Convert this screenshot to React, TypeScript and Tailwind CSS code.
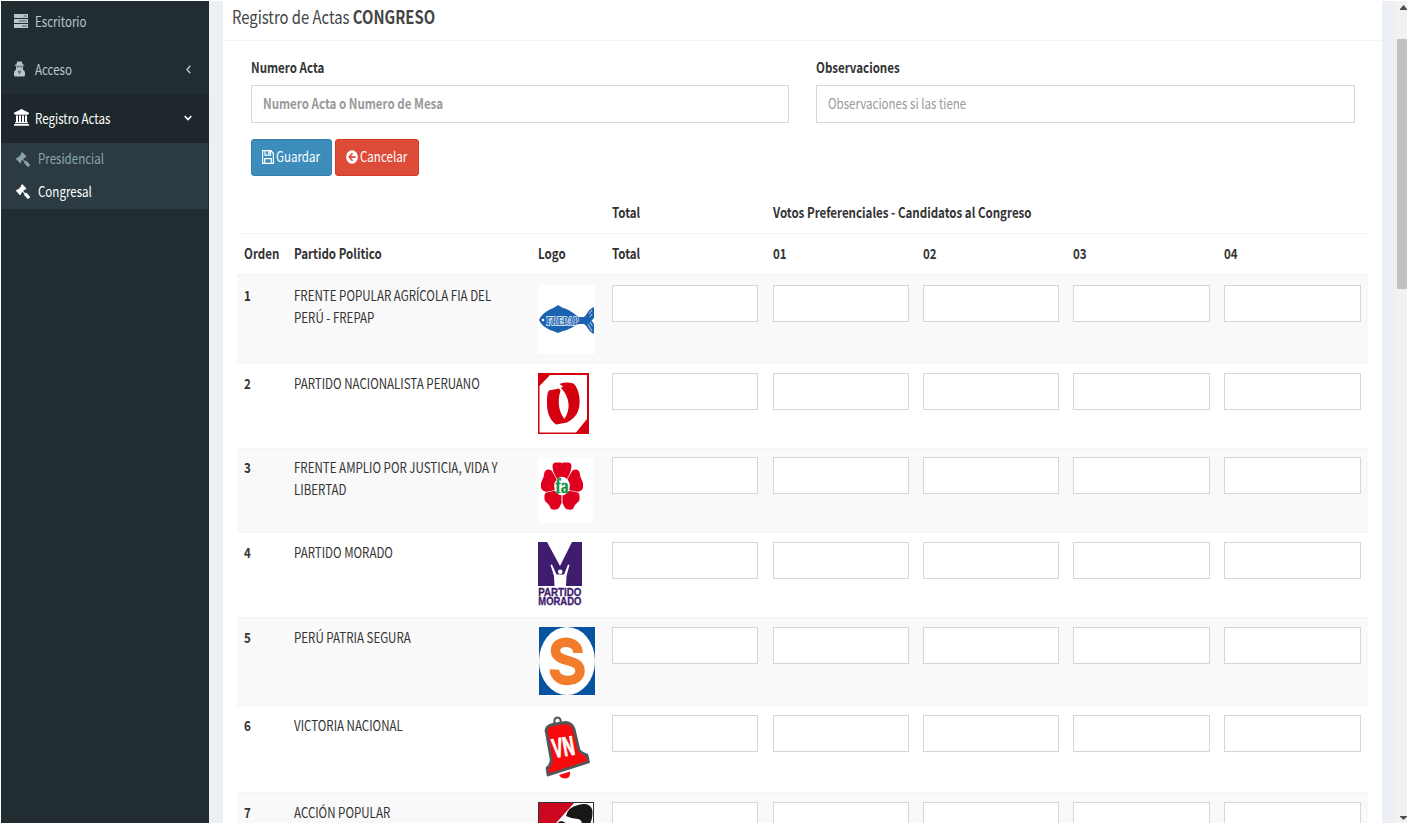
import React from "react";
import { FaArrowCircleLeft } from "react-icons/fa";

const FONT = "font-['Noto_Sans_CJK_SC','Noto_Sans',sans-serif]";

function T({ children, className = "" }: { children: React.ReactNode; className?: string }) {
  return (
    <span className={`inline-block origin-left -translate-y-px scale-x-[0.824] whitespace-nowrap ${className}`}>{children}</span>
  );
}

function TasksIcon() {
  return (
    <svg className="-mt-px h-[14px] w-[14px] shrink-0" viewBox="0 0 14 14" preserveAspectRatio="none">
      <path fill="#b8c7ce" d="M0 0h14v4H0zM0 5h14v4H0zM0 10h14v4H0z" />
      <path fill="#222d32" opacity=".7" d="M9.500 1.500h3.500v1h-3.500zM5 6.500h8v1H5zM8 11.500h5v1H8z" />
    </svg>
  );
}

function SecretIcon() {
  return (
    <svg className="-mt-[2px] h-[16px] w-[11px] shrink-0" viewBox="0 0 11 16" fill="currentColor">
      <path d="M3.300.300Q5.500 1 7.700.300L8.600 3.200 10.200 4V4.800H.800V4L2.400 3.200Z" />
      <path d="M2 5.300H9V7.200Q8.600 8.500 9.300 8.900Q11 9.500 11 12V14Q11 15.500 9.500 15.500H1.500Q0 15.500 0 14V12Q0 9.500 1.700 8.900Q2.400 8.500 2 7.200Z" />
      <path fill="#222d32" opacity=".65" d="M2.800 5.700H5L4.600 6.800H3.200ZM6 5.700H8.200L7.800 6.800H6.400ZM3.700 9.300 5.500 10.200 7.300 9.300 6.500 11.500 5.500 13.500 4.500 11.500Z" />
    </svg>
  );
}

function BankIcon() {
  return (
    <svg className="-mt-[2px] h-[17px] w-[15px] shrink-0" viewBox="0 0 15 17" fill="currentColor">
      <path d="M7.500 0 15 3.700V5H14V5.800H1V5H0V3.700ZM2 6.500H4V13H5V6.500H7V13H8V6.500H10V13H11V6.500H13V13H13.500L14 13.500V14.300H1V13.500L1.500 13H2ZM.500 15H14.500L15 15.500V16.800H0V15.500Z" />
    </svg>
  );
}

function Gavel() {
  return (
    <svg className="h-[15px] w-[14px] shrink-0" viewBox="30 0 1750 1780" preserveAspectRatio="none" fill="currentColor">
      <path d="M1771 1536q0 53-37 90l-107 108q-39 37-91 37-53 0-90-37l-363-364q-38-36-38-90 0-53 43-96l-256-256-126 126q-14 14-34 14t-34-14q2 2 12.500 12t12.500 13 10 11.500 10 13.500 6 13.500 5.500 16.500 1.500 18q0 38-28 68-3 3-16.500 18t-19 20.500-18.500 16.500-22 15.500-22 9-26 4.500q-40 0-68-28l-408-408q-28-28-28-68 0-13 4.500-26t9-22 15.500-22 16.500-18.500 20.500-19 18-16.500q30-28 68-28 10 0 18 1.500t16.500 5.500 13.500 6 13.500 10 11.500 10 13 12.500 12 12.500q-14-14-14-34t14-34l348-348q14-14 34-14t34 14q-2-2-12.500-12t-12.500-13-10-11.500-10-13.500-6-13.500-5.500-16.500-1.500-18q0-38 28-68 3-3 16.500-18t19-20.500 18.500-16.500 22-15.500 22-9 26-4.500q40 0 68 28l408 408q28 28 28 68 0 13-4.500 26t-9 22-15.500 22-16.500 18.500-20.500 19-18 16.500q-30 28-68 28-10 0-18-1.500t-16.500-5.500-13.500-6-13.500-10-11.500-10-13-12.500-12-12.500q14 14 14 34t-14 34l-126 126 256 256q43-43 96-43 52 0 91 37l363 363q37 39 37 91z" />
    </svg>
  );
}

function FishLogo() {
  return (
    <svg width="57" height="69" viewBox="0 0 57 69">
      <rect width="57" height="69" fill="#fff" />
      <path fill="#1b63b0" d="M1 35C4 28 11 25 17 22L20 20 25 23C31 24 36 29 41 32H46C49 30 50 24 56 22V33L53.500 35.500 56 39V49C51 47 50 42 46 39H41C36 41 31 45 25 46L20 48 15 46C9 44 3 40 1 35Z" />
      <circle cx="5" cy="35" r="1.300" fill="#fff" />
      <path stroke="#fff" strokeWidth=".7" fill="none" d="M51 29 54 25M52 32 54 29M50 39 54 46M52 37 54.500 41" />
      <text x="8.500" y="39.500" textLength="32" lengthAdjust="spacingAndGlyphs" fill="#1b63b0" stroke="#e8f0f8" strokeWidth="1.500" paintOrder="stroke" fontFamily="Liberation Serif" fontWeight="700" fontSize="12">FREPAP</text>
    </svg>
  );
}

function NacionalistaLogo() {
  return (
    <svg width="51" height="61" viewBox="0 0 51 61">
      <rect width="51" height="61" fill="#d5000f" />
      <path fill="#fff" d="M12 2H49V46L38 59.500H1.500V13Z" />
      <path fill="#d5000f" d="M11 17.500 21 15.500 22.500 17.500C19 29 21 39 26.500 46L33 46 29 49.500 18 51.500C12 47 9 40 9 31C9 25 9 20 11 17.500Z" />
      <path fill="#d5000f" d="M21.500 11C28 9 34 9 37 12C41 18 42 25 41.500 31C41 39 37 46 29 49L26 46.500C33 37 32 24 23 15L25 13.500Z" />
    </svg>
  );
}

function AmplioLogo() {
  return (
    <svg width="55" height="66" viewBox="0 0 55 66">
      <rect width="55" height="66" fill="#fff" />
      <g fill="#df0020">
        <path d="M14.500 9Q14.500 5 19 5.500H23L24 6.500 25 5.500H29Q33.500 5 33.500 9Q33 14 31.500 17L29 22H19L16.500 17Q14.500 14 14.500 9Z" />
        <path d="M32.300 17 34.500 13.500Q39 11 41.500 15L42.500 20 45 26V31Q43 35 39 34.800L31 33 28 25Z" />
        <path d="M15.700 17 13.500 13.500Q9 11 6.500 15L5.500 20 3 26V31Q5 35 9 34.800L17 33 20 25Z" />
        <path d="M32 33.800 40.500 35.800Q42.500 39 41 44L37 48 35 52Q30 54 27 51L24.500 46V36Z" />
        <path d="M16 33.800 7.500 35.800Q5.500 39 7 44L11 48 13 52Q18 54 21 51L23.500 46V36Z" />
      </g>
      <ellipse cx="24" cy="29" rx="7.800" ry="9.300" fill="#fff" />
      <text x="17.500" y="36" fill="#109447" stroke="#109447" strokeWidth=".5" fontFamily="Liberation Serif" fontWeight="700" fontSize="21" textLength="13" lengthAdjust="spacingAndGlyphs">fa</text>
    </svg>
  );
}

function MoradoLogo() {
  return (
    <svg className="overflow-visible" width="46" height="67" viewBox="0 0 46 67">
      <rect width="44" height="44" fill="#3e1d6e" />
      <path fill="#fff" d="M9 0H34L22 24ZM12.500 23 14 22.500 18.500 32.500H26L30 22.500 31.500 23 28.500 34 28 44H16.500L16 34Z" />
      <circle cx="22.200" cy="29.800" r="2.300" fill="#fff" />
      <g fill="#3e1d6e" stroke="#3e1d6e" strokeWidth=".3" fontFamily="Liberation Sans" fontWeight="700" fontSize="10">
        <text x=".3" y="54" textLength="43" lengthAdjust="spacingAndGlyphs">PARTIDO</text>
        <text x=".3" y="63" textLength="43" lengthAdjust="spacingAndGlyphs">MORADO</text>
      </g>
    </svg>
  );
}

function SeguraLogo() {
  return (
    <svg width="57" height="68" viewBox="0 0 57 68">
      <rect x="1" width="56" height="68" fill="#0653a0" />
      <ellipse cx="29" cy="34" rx="28" ry="34" fill="#fff" />
      <path fill="none" stroke="#f17c2c" strokeWidth="9.500" d="M40 26C40 12 17.500 12 17.500 23.500C17.500 36 42 31 42 43.500C42 58 16 56 16.500 42.500" />
    </svg>
  );
}

function VictoriaLogo() {
  return (
    <svg width="57" height="68" viewBox="0 0 57 68">
      <ellipse cx="19.500" cy="6" rx="3.200" ry="3.500" fill="none" stroke="#50585a" strokeWidth="2" />
      <path fill="#f90a0c" stroke="#50585a" strokeWidth="2.800" strokeLinejoin="round" d="M8.500 18Q6.500 12 14 9.500L28 7.500Q34 8 36 14L41 35Q43 38 49 40L50.500 47 10 60 9 53Q14 49 13 43Z" />
      <path fill="#f90a0c" d="M21 60 32 56.500Q33 63 27 63.500Q23 63.500 21 60Z" />
      <text x="16" y="43" transform="rotate(-10 16 43)" fill="#fff" stroke="#fff" strokeWidth="1" fontFamily="Liberation Sans" fontWeight="700" fontSize="27" textLength="22" lengthAdjust="spacingAndGlyphs">VN</text>
    </svg>
  );
}

function AccionLogo() {
  return (
    <svg width="56" height="68" viewBox="0 0 56 68">
      <rect x=".5" y=".5" width="55" height="67" fill="#fff" stroke="#333" />
      <path fill="#cc0720" d="M1 1H36L1 40Z" />
      <path fill="#191715" d="M28 14Q30 5 40 3Q51 0 54 7Q56 16 50 26H44Q45 18 40 17Q34 17 28 14ZM17 24Q20 19 24 19 28 21 33 24Z" />
    </svg>
  );
}

const rows = [
  { name: ["FRENTE POPULAR AGRÍCOLA FIA DEL", "PERÚ - FREPAP"], logo: <FishLogo />, cls: "h-[87px] bg-[#f9f9f9] pt-[9px]" },
  { name: ["PARTIDO NACIONALISTA PERUANO"], logo: <NacionalistaLogo />, cls: "h-[85px] border-t pt-[9px]" },
  { name: ["FRENTE AMPLIO POR JUSTICIA, VIDA Y", "LIBERTAD"], logo: <AmplioLogo />, cls: "h-[84px] border-t bg-[#f9f9f9] pt-[8px]" },
  { name: ["PARTIDO MORADO"], logo: <MoradoLogo />, cls: "h-[85px] border-t pt-[9px]" },
  { name: ["PERÚ PATRIA SEGURA"], logo: <SeguraLogo />, cls: "h-[88px] border-t bg-[#f9f9f9] pt-[9px]" },
  { name: ["VICTORIA NACIONAL"], logo: <VictoriaLogo />, cls: "h-[87px] border-t pt-[9px]" },
  { name: ["ACCIÓN POPULAR"], logo: <AccionLogo />, cls: "h-[87px] border-t bg-[#f9f9f9] pt-[9px]" },
];

const GRID = "grid shrink-0 grid-cols-[50px_244px_74px_161px_150px_150px_151px_151px] border-[#f4f4f4]";

function Field({ className = "" }: { className?: string }) {
  return <input className={`h-[37px] min-w-0 border border-[#d2d6de] bg-white outline-none ${className}`} />;
}

function Sidebar() {
  return (
    <aside className="w-[208px] shrink-0 bg-[#222d32] text-[#b8c7ce]">
      <div className="flex h-[45px] items-center pb-[4px] pl-[13px]">
        <TasksIcon />
        <T className="ml-[7px]">Escritorio</T>
      </div>
      <div className="flex h-[48px] items-center pl-[13px]">
        <SecretIcon />
        <T className="ml-[10px]">Acceso</T>
        <svg className="-mt-[2px] mr-[18px] ml-auto h-[9px] w-[5px]" viewBox="0 0 5 9" fill="none" stroke="currentColor" strokeWidth="1.400"><path d="M4.300.700 1 4.500 4.300 8.300" /></svg>
      </div>
      <div className="flex h-[49px] items-center bg-[#1e282c] pl-[13px] text-white">
        <BankIcon />
        <T className="ml-[6px]">Registro Actas</T>
        <svg className="-mt-[2px] mr-[17px] ml-auto h-[6px] w-[8px]" viewBox="0 0 8 6" fill="none" stroke="currentColor" strokeWidth="1.600"><path d="M.700 1 4 4.600 7.300 1" /></svg>
      </div>
      <div className="mr-px h-[66px] bg-[#2c3b41]">
        <div className="flex h-[32px] items-center pl-[15px] text-[#8aa4af]">
          <Gavel />
          <T className="ml-[8px]">Presidencial</T>
        </div>
        <div className="flex h-[33px] items-center pl-[15px] text-white">
          <Gavel />
          <T className="ml-[8px]">Congresal</T>
        </div>
      </div>
    </aside>
  );
}

export default function App() {
  return (
    <div className={`h-[826px] w-[1414px] overflow-hidden bg-white pt-px pr-[7px] pb-[3px] pl-px text-[14px] leading-[22px] text-[#333] ${FONT}`}>
      <div className="flex h-[822px] overflow-hidden">
        <Sidebar />
        <main className="flex min-w-0 flex-1 bg-[#ecf0f5] px-[14px]">
          <div className="flex w-[1159px] flex-col bg-white">
            <div className="flex h-[40px] shrink-0 items-center border-b border-[#f4f4f4] pb-[8px] pl-[9px] text-[18px] text-[#444]">
              <T>Registro de Actas <b>CONGRESO</b></T>
            </div>
            <div className="flex shrink-0 gap-[27px] pt-[16px] pl-[28px]">
              <div className="flex w-[538px] flex-col">
                <T className="font-bold">Numero Acta</T>
                <div className="mt-[6px] flex h-[38px] items-center border border-[#d2d6de] pl-[10.500px] font-bold text-[#999]">
                  <T>Numero Acta o Numero de Mesa</T>
                </div>
              </div>
              <div className="flex w-[539px] flex-col">
                <T className="font-bold">Observaciones</T>
                <div className="mt-[6px] flex h-[38px] items-center border border-[#d2d6de] pl-[11px] text-[#999]">
                  <T>Observaciones si las tiene</T>
                </div>
              </div>
            </div>
            <div className="flex shrink-0 gap-[3px] pt-[16px] pl-[28px] text-white">
              <button className="flex h-[37px] w-[81px] items-center rounded-[3px] border border-[#367fa9] bg-[#3c8dbc] pb-px pl-[10px]">
                <svg className="h-[14px] w-[12px] shrink-0" viewBox="0 0 12 14" fill="none" stroke="currentColor" strokeWidth="1.200">
                  <path d="M.600.600H9L11.400 3.500V13.400H.600ZM3 .600V5.200H8.500V.600M2.700 13V8.700H9.300V13" />
                  <path d="M6.800 1.200V4" strokeWidth="1.600" />
                </svg>
                <T className="ml-[2px]">Guardar</T>
              </button>
              <button className="flex h-[37px] w-[84px] items-center rounded-[3px] border border-[#d73925] bg-[#dd4b39] pb-px pl-[10px]">
                <FaArrowCircleLeft className="h-[14px] w-[12px] shrink-0" preserveAspectRatio="none" />
                <T className="ml-[2px]">Cancelar</T>
              </button>
            </div>
            <div className="mt-[15px] ml-[14px] flex w-[1131px] flex-col">
              <div className={`${GRID} h-[42px] pt-[11px] font-bold`}>
                <div className="col-start-4 pl-[7px]"><T>Total</T></div>
                <div className="col-span-4 pl-[7px]"><T>Votos Preferenciales - Candidatos al Congreso</T></div>
              </div>
              <div className={`${GRID} h-[43px] border-t border-b-2 pt-[9px] font-bold`}>
                {["Orden", "Partido Politico", "Logo", "Total", "01", "02", "03", "04"].map((h) => (
                  <div key={h} className="pl-[7px]"><T>{h}</T></div>
                ))}
              </div>
              {rows.map((r, i) => (
                <div key={i} className={`${GRID} ${r.cls}`}>
                  <div className="pl-[7px] font-bold"><T>{i + 1}</T></div>
                  <div className="flex flex-col pl-[7px]">
                    {r.name.map((n) => <T key={n}>{n}</T>)}
                  </div>
                  <div className="pl-[7px]">{r.logo}</div>
                  <Field className="mr-[8px] ml-[7px]" />
                  <Field className="mx-[7px]" />
                  <Field className="mx-[7px]" />
                  <Field className="mx-[7px]" />
                  <Field className="mx-[7px]" />
                </div>
              ))}
            </div>
          </div>
        </main>
        <div className="flex w-[11px] shrink-0 flex-col items-end bg-[#f1f1f1]">
          <svg className="mt-[4px] h-[5px] w-[7px] shrink-0" viewBox="0 0 7 5"><path fill="#505050" d="M0 5V4L3.500 0 7 4V5Z" /></svg>
          <div className="mt-[29px] h-[250px] w-[10px] shrink-0 bg-[#c1c1c1]" />
          <svg className="mt-auto mb-[3px] h-[4px] w-[7px] shrink-0" viewBox="0 0 7 4"><path fill="#505050" d="M0 0H7V.800L3.500 4 0 .800Z" /></svg>
        </div>
      </div>
    </div>
  );
}
